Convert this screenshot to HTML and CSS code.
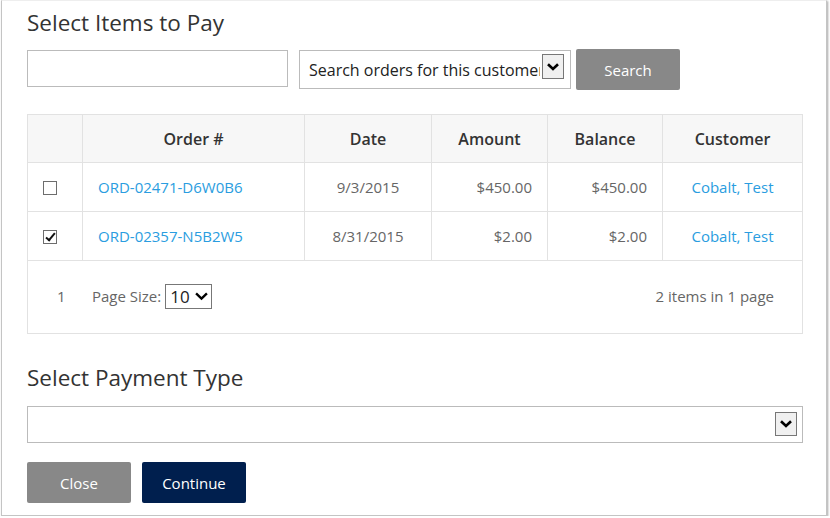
FILE: index.html
```html
<!DOCTYPE html>
<html lang="en">
    <head>
        <meta charset="UTF-8">
        <title>Select Items to Pay</title>
        <link rel="stylesheet" href="styles.css">
    </head>
    <body>
        <div class="dialog">
            <h2 class="section-title">Select Items to Pay</h2>

            <div class="search-row">
                <input type="text" class="search-input">
                <div class="select-wrap search-scope">
                    <select>
                        <option>Search orders for this customer</option>
                    </select>
                    <span class="select-arrow">
                        <svg viewBox="0 0 12 8" width="12" height="8"><path d="M1 1.2 6 6 11 1.2" fill="none" stroke="#000" stroke-width="2.6"/></svg>
                    </span>
                </div>
                <button class="btn btn-grey btn-search">Search</button>
            </div>

            <table class="grid">
                <colgroup>
                    <col style="width: 55px">
                    <col style="width: 222px">
                    <col style="width: 127px">
                    <col style="width: 116px">
                    <col style="width: 115px">
                    <col>
                </colgroup>
                <thead>
                    <tr>
                        <th></th>
                        <th>Order #</th>
                        <th>Date</th>
                        <th>Amount</th>
                        <th>Balance</th>
                        <th>Customer</th>
                    </tr>
                </thead>
                <tbody>
                    <tr>
                        <td class="col-check"><input type="checkbox"></td>
                        <td class="col-order"><a href="#">ORD-02471-D6W0B6</a></td>
                        <td class="col-date">9/3/2015</td>
                        <td class="col-money">$450.00</td>
                        <td class="col-money">$450.00</td>
                        <td class="col-customer"><a href="#">Cobalt, Test</a></td>
                    </tr>
                    <tr>
                        <td class="col-check"><input type="checkbox" checked></td>
                        <td class="col-order"><a href="#">ORD-02357-N5B2W5</a></td>
                        <td class="col-date">8/31/2015</td>
                        <td class="col-money">$2.00</td>
                        <td class="col-money">$2.00</td>
                        <td class="col-customer"><a href="#">Cobalt, Test</a></td>
                    </tr>
                </tbody>
                <tfoot>
                    <tr>
                        <td colspan="6">
                            <div class="pager">
                                <span class="page-num">1</span>
                                <label class="page-size">Page Size:
                                    <span class="select-wrap small">
                                        <select>
                                            <option>10</option>
                                            <option>25</option>
                                        </select>
                                        <span class="small-arrow">
                                            <svg viewBox="0 0 12 8" width="13" height="9"><path d="M1 1.2 6 6 11 1.2" fill="none" stroke="#000" stroke-width="2.2"/></svg>
                                        </span>
                                    </span>
                                </label>
                                <span class="page-info">2 items in 1 page</span>
                            </div>
                        </td>
                    </tr>
                </tfoot>
            </table>

            <h2 class="section-title payment-title">Select Payment Type</h2>

            <div class="select-wrap payment-type">
                <select>
                    <option></option>
                </select>
                <span class="select-arrow">
                    <svg viewBox="0 0 12 8" width="12" height="8"><path d="M1 1.2 6 6 11 1.2" fill="none" stroke="#000" stroke-width="2.6"/></svg>
                </span>
            </div>

            <div class="actions">
                <button class="btn btn-grey">Close</button>
                <button class="btn btn-navy">Continue</button>
            </div>
        </div>
    </body>
</html>
```

FILE: styles.css
```css
body {
    margin: 0;
    background: #fff;
    color: #333;
    font-family: "Open Sans", "Liberation Sans", Arial, sans-serif;
}

.dialog {
    width: 776px;
    margin-left: 1px;
    padding: 6px 23px 12px 25px;
    background: #fff;
    border: 1px solid #c4c4c4;
    border-top-color: #eee;
    box-shadow: 1px 1px 2px rgba(0, 0, 0, 0.35);
}

.section-title {
    margin: 0;
    font-size: 22.5px;
    font-weight: normal;
    line-height: 32px;
    color: #333;
}

.search-row {
    display: flex;
    align-items: center;
    margin-top: 10px;
    height: 41px;
}

.search-input {
    width: 261px;
    height: 37px;
    box-sizing: border-box;
    margin: 0 11px 2px 0;
    padding: 0 8px;
    border: 1px solid #bbb;
    font: inherit;
}

.select-wrap {
    position: relative;
    display: inline-block;
}

.select-wrap select {
    appearance: none;
    -webkit-appearance: none;
    box-sizing: border-box;
    margin: 0;
    background: #fff;
    border: 1px solid #bbb;
    font-family: inherit;
    color: #222;
    outline: 0;
}

.search-scope select {
    width: 272px;
    height: 39px;
    padding: 0 30px 0 9px;
    font-size: 16px;
    text-overflow: clip;
}

.select-arrow {
    position: absolute;
    top: 4px;
    right: 7px;
    width: 20px;
    height: 23px;
    display: flex;
    align-items: center;
    justify-content: center;
    background: #f0f0f0;
    border: 1px solid #777;
    pointer-events: none;
}

.btn {
    height: 41px;
    width: 104px;
    border: 0;
    border-radius: 2px;
    color: #fff;
    font-family: inherit;
    font-size: 15px;
    cursor: pointer;
}

.btn-search {
    margin-left: 5px;
}

.btn-grey { background: #888; }
.btn-navy { background: #001f4e; }

.grid {
    width: 100%;
    table-layout: fixed;
    margin-top: 24px;
    border-collapse: collapse;
    font-size: 15px;
    color: #666;
}

.grid th,
.grid td {
    border: 1px solid #e2e2e2;
    padding: 0 15px;
}

.grid th {
    height: 48px;
    box-sizing: border-box;
    background: #f7f7f7;
    color: #333;
    font-size: 16px;
    font-weight: 600;
    text-align: center;
}

.grid tbody td {
    height: 48px;
}

.grid a {
    color: #2a9de0;
    text-decoration: none;
}

.col-order { text-align: left; }
.col-date { text-align: center; }
.col-money { text-align: right; }
.col-customer { text-align: center; }

.grid input[type="checkbox"] {
    appearance: none;
    -webkit-appearance: none;
    position: relative;
    box-sizing: border-box;
    width: 14px;
    height: 14px;
    margin: 0 0 2px 0;
    vertical-align: middle;
    background: #fff;
    border: 1px solid #6d6d6d;
}

.grid input[type="checkbox"]:checked::after {
    content: "";
    position: absolute;
    left: 4px;
    top: 0;
    width: 3px;
    height: 8px;
    border: solid #111;
    border-width: 0 2.5px 2.5px 0;
    transform: rotate(40deg);
}

.grid tfoot td {
    height: 72px;
    padding: 0 28px 0 29px;
}

.pager {
    display: flex;
    align-items: center;
    margin-top: -2px;
}

.page-num {
    width: 35px;
}

.page-size {
    display: flex;
    align-items: center;
    gap: 4px;
}

.small select {
    width: 47px;
    height: 25px;
    padding: 0 0 0 4px;
    border-color: #777;
    font-size: 17px;
    color: #222;
}

.small-arrow {
    position: absolute;
    right: 4px;
    top: 8px;
    display: flex;
    pointer-events: none;
}

.page-info {
    margin-left: auto;
}

.payment-title {
    margin-top: 28px;
}

.payment-type {
    display: block;
    margin-top: 12px;
}

.payment-type select {
    width: 100%;
    height: 37px;
}

.payment-type .select-arrow {
    top: 6px;
    right: 6px;
    height: 22px;
}

.actions {
    display: flex;
    gap: 11px;
    margin-top: 19px;
}
```
